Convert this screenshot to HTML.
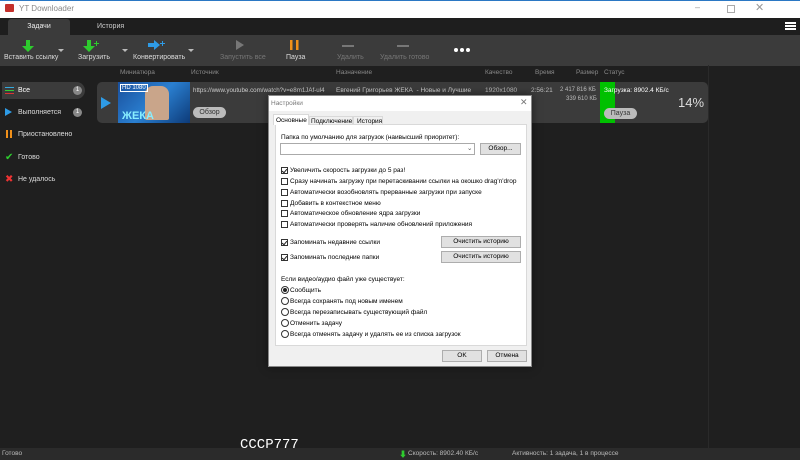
<!DOCTYPE html><html><head><meta charset="utf-8"><style>
*{margin:0;padding:0;box-sizing:border-box}
body{width:800px;height:460px;overflow:hidden;background:#1f1f1f;font-family:"Liberation Sans","Noto Sans CJK SC",sans-serif;font-size:7px;color:#ddd;position:relative}
.a{position:absolute;white-space:nowrap}
.cb{position:absolute;width:7px;height:7px;border:1px solid #333;background:#fff}
.ck::after{content:"";position:absolute;left:1px;top:0;width:2px;height:4px;border:solid #222;border-width:0 1px 1px 0;transform:rotate(40deg)}
.rb{position:absolute;width:8px;height:8px;border:1px solid #333;border-radius:50%;background:#fff}
.btn{position:absolute;background:#e1e1e1;border:1px solid #adadad;color:#000;text-align:center;font-size:6.5px}
.dt{color:#000;font-size:6.5px}
.row{font-size:6.5px}
</style></head><body>
<div class="a" style="left:0;top:0;width:800px;height:18px;background:#fff;border-top:1px solid #2b78c4"></div>
<div class="a" style="left:5px;top:4px;width:9px;height:8px;background:#c4302b;border-radius:1px"></div>
<div class="a" style="left:19px;top:4px;color:#888;font-size:8px">YT Downloader</div>
<div class="a" style="left:695px;top:2px;color:#999;font-size:9px">–</div>
<div class="a" style="left:727px;top:5px;width:8px;height:8px;border:1px solid #aaa"></div>
<div class="a" style="left:755px;top:1px;color:#999;font-size:11px">✕</div>
<div class="a" style="left:0;top:18px;width:800px;height:17px;background:#1e1e1e"></div>
<div class="a" style="left:8px;top:19px;width:62px;height:16px;background:#3b3b3b;border-radius:3px 3px 0 0;text-align:center;line-height:16px;color:#eee">Задачи</div>
<div class="a" style="left:97px;top:23px;color:#ccc">История</div>
<div class="a" style="left:785px;top:22px;width:11px;height:2px;background:#fff;box-shadow:0 3px #fff,0 6px #fff"></div>
<div class="a" style="left:0;top:35px;width:800px;height:31px;background:#3b3b3b"></div>
<svg class="a" style="left:0;top:35px" width="480" height="31">
<g fill="#2ecc2e"><path d="M26 5h4v6h4l-6 6-6-6h4z"/><path d="M87 5h4v6h4l-6 6-6-6h4z"/><path d="M96 6h1v2h2v1h-2v2h-1v-2h-2v-1h2z"/></g>
<path d="M148 8h6v-3l6 5-6 5v-3h-6z" fill="#2e9be6"/><path d="M162 6h1v2h2v1h-2v2h-1v-2h-2v-1h2z" fill="#2e9be6"/>
<g fill="#bbb"><path d="M58 14h6l-3 3z"/><path d="M122 14h6l-3 3z"/><path d="M188 14h6l-3 3z"/></g>
<path d="M236 5l8 5-8 5z" fill="#777"/>
<g fill="#f0901a"><rect x="290" y="5" width="2.5" height="10"/><rect x="296" y="5" width="2.5" height="10"/></g>
<g fill="#777"><rect x="342" y="10" width="12" height="2"/><rect x="397" y="10" width="12" height="2"/></g>
<g fill="#fff"><circle cx="456" cy="15" r="2"/><circle cx="462" cy="15" r="2"/><circle cx="468" cy="15" r="2"/></g>
</svg>
<div class="a" style="left:4px;top:54px;color:#ddd">Вставить ссылку</div>
<div class="a" style="left:78px;top:54px;color:#ddd">Загрузить</div>
<div class="a" style="left:133px;top:54px;color:#ddd">Конвертировать</div>
<div class="a" style="left:220px;top:54px;color:#777">Запустить все</div>
<div class="a" style="left:286px;top:54px;color:#ddd">Пауза</div>
<div class="a" style="left:337px;top:54px;color:#777">Удалить</div>
<div class="a" style="left:380px;top:54px;color:#777">Удалить готово</div>
<div class="a row" style="left:120px;top:69px;color:#888">Миниатюра</div>
<div class="a row" style="left:191px;top:69px;color:#888">Источник</div>
<div class="a row" style="left:336px;top:69px;color:#888">Назначение</div>
<div class="a row" style="left:485px;top:69px;color:#888">Качество</div>
<div class="a row" style="left:535px;top:69px;color:#888">Время</div>
<div class="a row" style="left:576px;top:69px;color:#888">Размер</div>
<div class="a row" style="left:604px;top:69px;color:#888">Статус</div>
<div class="a" style="left:708px;top:65px;width:1px;height:383px;background:#2a2a2a"></div>
<div class="a" style="left:2px;top:82px;width:83px;height:17px;background:#3b3b3b;border-radius:0 9px 9px 0"></div>
<div class="a" style="left:5px;top:87px;width:9px;height:1px;background:#3ad;box-shadow:0 3px #3c3,0 6px #d33"></div>
<div class="a" style="left:18px;top:87px;color:#fff">Все</div>
<div class="a" style="left:73px;top:86px;width:9px;height:9px;border-radius:50%;background:#888;color:#fff;font-size:6px;text-align:center;line-height:9px">1</div>
<div class="a" style="left:5px;top:108px;width:0;height:0;border-left:7px solid #2e9be6;border-top:4px solid transparent;border-bottom:4px solid transparent"></div>
<div class="a" style="left:18px;top:109px;color:#ddd">Выполняется</div>
<div class="a" style="left:73px;top:108px;width:9px;height:9px;border-radius:50%;background:#888;color:#fff;font-size:6px;text-align:center;line-height:9px">1</div>
<div class="a" style="left:6px;top:130px;width:2px;height:8px;background:#f0901a;box-shadow:4px 0 #f0901a"></div>
<div class="a" style="left:18px;top:131px;color:#ddd">Приостановлено</div>
<div class="a" style="left:5px;top:152px;color:#2ecc2e;font-size:10px">✔</div>
<div class="a" style="left:18px;top:154px;color:#ddd">Готово</div>
<div class="a" style="left:5px;top:174px;color:#e33;font-size:10px">✖</div>
<div class="a" style="left:18px;top:176px;color:#ddd">Не удалось</div>
<div class="a" style="left:97px;top:82px;width:611px;height:41px;background:#3b3b3b;border-radius:5px"></div>
<div class="a" style="left:101px;top:97px;width:0;height:0;border-left:10px solid #2e9be6;border-top:6px solid transparent;border-bottom:6px solid transparent"></div>
<div class="a" style="left:118px;top:82px;width:72px;height:41px;background:linear-gradient(135deg,#1a4f9c,#2a7fd0 50%,#0d3a78)"></div>
<div class="a" style="left:145px;top:86px;width:24px;height:34px;background:#c9a58a;border-radius:8px 8px 2px 2px"></div>
<div class="a" style="left:120px;top:84px;font-size:6px;color:#fff;border:1px solid #fff;padding:0 1px">HD 1080</div>
<div class="a" style="left:122px;top:110px;font-size:11px;font-weight:bold;color:#8ef">ЖЕКА</div>
<div class="a row" style="left:193px;top:87px;color:#ccc;font-size:6.2px">https://www.youtube.com/watch?v=e8m1JAf-ul4</div>
<div class="a row" style="left:336px;top:87px;color:#ccc">Евгений Григорьев ЖЕКА &nbsp;- Новые и Лучшие</div>
<div class="a" style="left:193px;top:107px;width:33px;height:11px;background:#bbb;border-radius:6px;color:#333;text-align:center;line-height:11px">Обзор</div>
<div class="a row" style="left:485px;top:87px;color:#bbb">1920x1080</div>
<div class="a row" style="left:531px;top:87px;color:#bbb">2:56:21</div>
<div class="a row" style="left:560px;top:87px;color:#bbb;font-size:6px">2 417 816 КБ</div>
<div class="a row" style="left:566px;top:96px;color:#bbb;font-size:6px">339 610 КБ</div>
<div class="a" style="left:600px;top:82px;width:15px;height:41px;background:#00c000"></div>
<div class="a row" style="left:604px;top:87px;color:#fff">Загрузка: 8902.4 КБ/с</div>
<div class="a" style="left:678px;top:95px;color:#ddd;font-size:13px">14%</div>
<div class="a" style="left:604px;top:108px;width:33px;height:11px;background:#bbb;border-radius:6px;color:#333;text-align:center;line-height:11px">Пауза</div>
<!-- dialog -->
<div class="a" style="left:268px;top:95px;width:264px;height:272px;background:#f0f0f0;border:1px solid #888;box-shadow:0 0 8px rgba(0,0,0,.5)"></div>
<div class="a" style="left:269px;top:96px;width:262px;height:15px;background:#fff"></div>
<div class="a dt" style="left:271px;top:100px;color:#777">Настройки</div>
<div class="a" style="left:520px;top:97px;color:#777;font-size:9px">✕</div>
<div class="a" style="left:275px;top:124px;width:252px;height:222px;background:#fff;border:1px solid #d9d9d9"></div>
<div class="a" style="left:273px;top:114px;width:36px;height:11px;background:#fff;border:1px solid #d9d9d9;border-bottom:none"></div>
<div class="a dt" style="left:276px;top:117px">Основные</div>
<div class="a" style="left:309px;top:116px;width:44px;height:9px;border:1px solid #d9d9d9;border-bottom:none"></div>
<div class="a dt" style="left:311px;top:118px">Подключение</div>
<div class="a" style="left:353px;top:116px;width:30px;height:9px;border:1px solid #d9d9d9;border-bottom:none"></div>
<div class="a dt" style="left:357px;top:118px">История</div>
<div class="a dt" style="left:281px;top:134px">Папка по умолчанию для загрузок (наивысший приоритет):</div>
<div class="a" style="left:280px;top:143px;width:195px;height:12px;background:#fff;border:1px solid #aaa"></div>
<div class="a dt" style="left:467px;top:144px;color:#555">⌄</div>
<div class="btn" style="left:480px;top:143px;width:41px;height:12px;line-height:10px">Обзор...</div>
<div class="cb ck" style="left:281px;top:167px"></div><div class="a dt" style="left:290px;top:167px">Увеличить скорость загрузки до 5 раз!</div>
<div class="cb" style="left:281px;top:178px"></div><div class="a dt" style="left:290px;top:178px">Сразу начинать загрузку при перетаскивании ссылки на окошко drag'n'drop</div>
<div class="cb" style="left:281px;top:189px"></div><div class="a dt" style="left:290px;top:189px">Автоматически возобновлять прерванные загрузки при запуске</div>
<div class="cb" style="left:281px;top:200px"></div><div class="a dt" style="left:290px;top:200px">Добавить в контекстное меню</div>
<div class="cb" style="left:281px;top:210px"></div><div class="a dt" style="left:290px;top:210px">Автоматическое обновление ядра загрузки</div>
<div class="cb" style="left:281px;top:221px"></div><div class="a dt" style="left:290px;top:221px">Автоматически проверять наличие обновлений приложения</div>
<div class="cb ck" style="left:281px;top:239px"></div><div class="a dt" style="left:290px;top:239px">Запоминать недавние ссылки</div>
<div class="btn" style="left:441px;top:236px;width:80px;height:12px;line-height:10px">Очистить историю</div>
<div class="cb ck" style="left:281px;top:254px"></div><div class="a dt" style="left:290px;top:254px">Запоминать последние папки</div>
<div class="btn" style="left:441px;top:251px;width:80px;height:12px;line-height:10px">Очистить историю</div>
<div class="a dt" style="left:281px;top:276px">Если видео/аудио файл уже существует:</div>
<div class="rb" style="left:281px;top:286px"><div style="width:4px;height:4px;background:#222;border-radius:50%;margin:1px"></div></div><div class="a dt" style="left:290px;top:287px">Сообщить</div>
<div class="rb" style="left:281px;top:297px"></div><div class="a dt" style="left:290px;top:298px">Всегда сохранять под новым именем</div>
<div class="rb" style="left:281px;top:308px"></div><div class="a dt" style="left:290px;top:309px">Всегда перезаписывать существующий файл</div>
<div class="rb" style="left:281px;top:319px"></div><div class="a dt" style="left:290px;top:320px">Отменить задачу</div>
<div class="rb" style="left:281px;top:330px"></div><div class="a dt" style="left:290px;top:331px">Всегда отменять задачу и удалять ее из списка загрузок</div>
<div class="btn" style="left:442px;top:350px;width:40px;height:12px;line-height:10px">OK</div>
<div class="btn" style="left:487px;top:350px;width:40px;height:12px;line-height:10px">Отмена</div>
<!-- status -->
<div class="a" style="left:240px;top:437px;color:#fff;font-family:'Liberation Mono',monospace;font-size:14px">CCCP777</div>
<div class="a" style="left:0;top:448px;width:800px;height:12px;background:#2b2b2b"></div>
<div class="a" style="left:2px;top:450px;color:#bbb;font-size:6.5px">Готово</div>
<div class="a" style="left:399px;top:449px;color:#2ecc2e;font-size:8px">⬇</div>
<div class="a" style="left:408px;top:450px;color:#bbb;font-size:6.5px">Скорость: 8902.40 КБ/с</div>
<div class="a" style="left:512px;top:450px;color:#bbb;font-size:6.5px">Активность: 1 задача, 1 в процессе</div>
</body></html>
